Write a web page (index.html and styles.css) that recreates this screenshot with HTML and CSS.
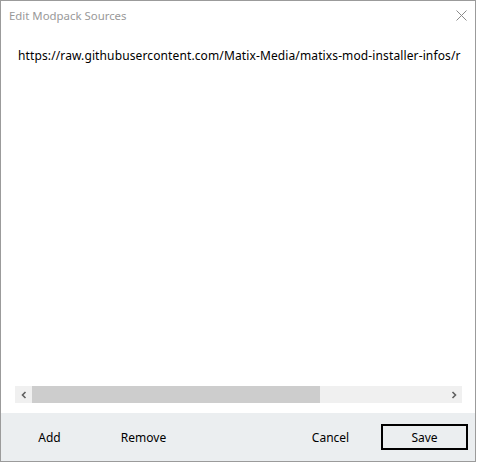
FILE: index.html
```html
<!DOCTYPE html>
<html>
<head>
<meta charset="utf-8">
<link rel="stylesheet" href="styles.css">
</head>
<body>
<div class="window">
  <div class="titlebar">
    <span class="title">Edit Modpack Sources</span>
    <svg class="close" width="11" height="11" viewBox="0 0 11 11"><path d="M0.5 0.5 L10.5 10.5 M10.5 0.5 L0.5 10.5" stroke="#8a8a8a" stroke-width="1" fill="none"/></svg>
  </div>
  <div class="content">
    <div class="list">
      <div class="item">https://raw.githubusercontent.com/Matix-Media/matixs-mod-installer-infos/r</div>
    </div>
    <div class="hscroll">
      <div class="arrow"><svg width="8" height="8" viewBox="0 0 8 8"><path d="M5.5 1 L2.5 4 L5.5 7" stroke="#606060" stroke-width="1.6" fill="none"/></svg></div>
      <div class="track"><div class="thumb"></div></div>
      <div class="arrow"><svg width="8" height="8" viewBox="0 0 8 8"><path d="M2.5 1 L5.5 4 L2.5 7" stroke="#606060" stroke-width="1.6" fill="none"/></svg></div>
    </div>
  </div>
  <div class="footer">
    <div class="btn">Add</div>
    <div class="btn">Remove</div>
    <div class="spacer"></div>
    <div class="btn">Cancel</div>
    <div class="btn primary">Save</div>
  </div>
</div>
</body>
</html>
```

FILE: styles.css
```css
html, body {
  margin: 0;
  padding: 0;
  background: #ffffff;
}
body {
  font-family: "Noto Sans", "Open Sans", sans-serif;
  font-size: 12px;
  color: #000;
}
.window {
  width: 476px;
  height: 462px;
  box-sizing: border-box;
  border: 1px solid #9b9b9b;
  display: flex;
  flex-direction: column;
  background: #fff;
}
.titlebar {
  height: 30px;
  display: flex;
  align-items: center;
  justify-content: space-between;
  padding: 0 8px 0 8px;
  flex: none;
}
.title {
  color: #999999;
  font-size: 11.4px;
  margin-top: -1px;
}
.close {
  margin-top: -1px;
}
.content {
  flex: 1;
  display: flex;
  flex-direction: column;
  padding: 0 13px 10px 14px;
}
.list {
  flex: 1;
  overflow: hidden;
  padding-top: 16px;
}
.item {
  white-space: nowrap;
  padding-left: 3px;
  line-height: 18px;
  letter-spacing: 0.12px;
}
.hscroll {
  height: 17px;
  display: flex;
  background: #f0f0f0;
  flex: none;
}
.arrow {
  width: 17px;
  display: flex;
  align-items: center;
  justify-content: center;
  flex: none;
}
.track {
  flex: 1;
}
.thumb {
  width: 288px;
  height: 100%;
  background: #cdcdcd;
}
.footer {
  height: 48px;
  flex: none;
  background: #ebeef0;
  display: flex;
  align-items: center;
  padding: 0 7px 0 5px;
  box-sizing: border-box;
  gap: 7px;
}
.spacer {
  flex: 1;
}
.btn {
  width: 87px;
  height: 26px;
  box-sizing: border-box;
  display: flex;
  align-items: center;
  justify-content: center;
  font-size: 12px;
  color: #000;
}
.primary {
  border: 2px solid #000;
}
```
